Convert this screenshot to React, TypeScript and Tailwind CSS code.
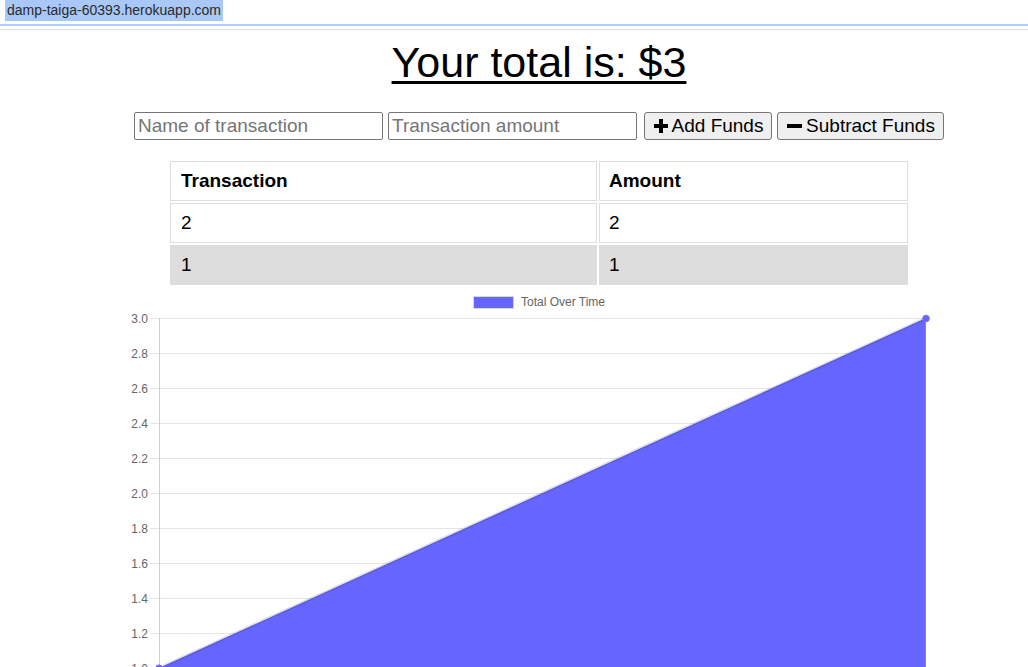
import React from "react";

const F = { fontFamily: '"Liberation Sans", Arial, sans-serif' } as const;

function Chart() {
  const off = 287;
  const y = (py: number) => py - off;
  const labels = ["3.0", "2.8", "2.6", "2.4", "2.2", "2.0", "1.8", "1.6", "1.4", "1.2", "1.0"];
  return (
    <svg width={1028} height={400} viewBox="0 0 1028 400" className="block">
      {/* legend */}
      <rect x={473.5} y={y(296.5)} width={40} height={12} fill="#6666ff" stroke="#d6d6e6" strokeWidth={1} />
      <text x={521} y={y(306)} fontSize={12} fill="#666" style={F}>
        Total Over Time
      </text>
      {/* gridlines + labels */}
      {labels.map((l, i) => {
        const py = 318 + i * 35;
        return (
          <g key={l}>
            <line x1={150} x2={926} y1={y(py) + 0.5} y2={y(py) + 0.5} stroke="#e5e5e5" strokeWidth={1} />
            <text x={148} y={y(py) + 4.5} fontSize={12} fill="#666" textAnchor="end" style={F}>
              {l}
            </text>
          </g>
        );
      })}
      <line x1={159.5} x2={159.5} y1={y(318)} y2={400} stroke="#cfcfcf" strokeWidth={1} />
      {/* fill */}
      <polygon points={`159,${y(668)} 926,${y(318)} 926,400 159,400`} fill="#6666ff" />
      <line x1={159} y1={y(668)} x2={926} y2={y(318)} stroke="rgba(0,0,0,0.12)" strokeWidth={3} />
      <line x1={925.5} y1={y(318)} x2={925.5} y2={400} stroke="#8080ff" strokeWidth={1} />
      <circle cx={926} cy={y(318.5)} r={3.5} fill="#6666ff" stroke="#7777ee" strokeWidth={0.5} />
      <circle cx={159} cy={y(668)} r={3.5} fill="#6666ff" />
    </svg>
  );
}

function PlusIcon() {
  return (
    <svg width={16} height={16} viewBox="0 0 16 16" className="shrink-0">
      <path d="M6 1h4v5h5v4h-5v5H6v-5H1V6h5z" fill="#000" />
    </svg>
  );
}

function MinusIcon() {
  return (
    <svg width={16} height={16} viewBox="0 0 16 16" className="shrink-0">
      <rect x={1} y={6} width={15} height={4} fill="#000" />
    </svg>
  );
}

export default function App() {
  return (
    <div className="w-[1028px] h-[667px] overflow-hidden bg-white text-black" style={F}>
      {/* top url bar */}
      <div className="h-[24px] flex items-start">
        <span className="ml-[5px] h-[21px] px-[2px] leading-[21px] text-[14px] text-[#2a2a2a] bg-[#a9c8f7]">
          damp-taiga-60393.herokuapp.com
        </span>
      </div>
      <div className="h-[2px] bg-[#b3cdf4]" />
      <div className="h-[3px]" />
      <div className="h-[1px] bg-[#dcdcdc]" />

      <div className="pl-[50px] flex flex-col items-center">
        <h1 className="mt-[8px] text-[43px] leading-[49px] font-normal whitespace-pre underline decoration-[3px] underline-offset-[4px]">
          Your total is: $3
        </h1>

        <div className="mt-[25px] flex items-center h-[28px] text-[19px]">
          <input
            className="w-[249px] h-[28px] border border-[#767676] rounded-[2px] px-[3px] text-[19px] placeholder:text-[#757575] outline-none"
            placeholder="Name of transaction"
            style={F}
          />
          <input
            className="ml-[5px] w-[249px] h-[28px] border border-[#767676] rounded-[2px] px-[3px] text-[19px] placeholder:text-[#757575] outline-none"
            placeholder="Transaction amount"
            style={F}
          />
          <button
            className="ml-[7px] w-[128px] h-[28px] border border-[#767676] rounded-[3px] bg-[#efefef] flex items-center justify-center gap-[3px] text-[19px] text-black"
            style={F}
          >
            <PlusIcon />
            <span>Add Funds</span>
          </button>
          <button
            className="ml-[5px] w-[167px] h-[28px] border border-[#767676] rounded-[3px] bg-[#efefef] flex items-center justify-center gap-[4px] text-[19px] text-black"
            style={F}
          >
            <MinusIcon />
            <span>Subtract Funds</span>
          </button>
        </div>

        <table className="mt-[19px] border-separate border-spacing-[2px] text-[19px] w-[742px]">
          <thead>
            <tr>
              <th className="w-[427px] h-[40px] border border-[#dddddd] px-[10px] text-left font-bold leading-[22px]">Transaction</th>
              <th className="h-[40px] border border-[#dddddd] px-[9px] text-left font-bold leading-[22px]">Amount</th>
            </tr>
          </thead>
          <tbody>
            <tr>
              <td className="h-[40px] border border-[#dddddd] px-[10px] leading-[22px]">2</td>
              <td className="h-[40px] border border-[#dddddd] px-[9px] leading-[22px]">2</td>
            </tr>
            <tr className="bg-[#dddddd]">
              <td className="h-[40px] border border-[#dddddd] px-[10px] leading-[22px]">1</td>
              <td className="h-[40px] border border-[#dddddd] px-[9px] leading-[22px]">1</td>
            </tr>
          </tbody>
        </table>
      </div>
      <Chart />
    </div>
  );
}
